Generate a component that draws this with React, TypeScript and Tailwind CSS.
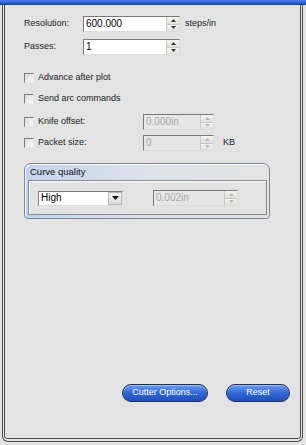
import React from "react";

const font = { fontFamily: '"Liberation Sans", Arial, sans-serif' };

function Spinner({ disabled }: { disabled?: boolean }) {
  const arrow = disabled ? "#b8b8b8" : "#333";
  return (
    <div className="flex h-full w-[13px] flex-col border-l border-[#c8c8c8] bg-[#ecebe6]">
      <div className="flex flex-1 items-center justify-center border-b border-[#c8c8c8] bg-gradient-to-b from-[#f6f5f2] to-[#e2e0da]">
        <svg width="5" height="3" viewBox="0 0 5 3"><path d="M0 3 L2.5 0 L5 3 Z" fill={arrow} /></svg>
      </div>
      <div className="flex flex-1 items-center justify-center bg-gradient-to-b from-[#f6f5f2] to-[#e2e0da]">
        <svg width="5" height="3" viewBox="0 0 5 3"><path d="M0 0 L2.5 3 L5 0 Z" fill={arrow} /></svg>
      </div>
    </div>
  );
}

function SpinInput({ value, width, disabled }: { value: string; width: number; disabled?: boolean }) {
  return (
    <div
      className={`flex h-[16px] border border-t-[#7a7a7a] border-l-[#7a7a7a] border-r-[#dcdcdc] border-b-[#dcdcdc] ${disabled ? "bg-[#e6e6e6]" : "bg-white"}`}
      style={{ width }}
    >
      <div className={`flex flex-1 items-center pl-[2px] text-[10px] leading-none ${disabled ? "text-[#a8a8a8]" : "text-black"}`}>{value}</div>
      <Spinner disabled={disabled} />
    </div>
  );
}

function Checkbox() {
  return (
    <div className="h-[10px] w-[10px] border border-t-[#7d7d7d] border-l-[#7d7d7d] border-r-[#e8e8e8] border-b-[#e8e8e8] bg-gradient-to-br from-[#dcdcd6] to-[#f8f8f6]" />
  );
}

export default function App() {
  return (
    <div className="flex h-[445px] w-[306px] flex-col bg-[#e3e3e3] text-[9px] text-[#222]" style={font}>
      <div className="h-[5px] w-full shrink-0 border-b border-[#1c3f94] bg-gradient-to-b from-[#4f82e4] to-[#1f4fc0]" />
      <div className="ml-[2px] mr-[3px] mb-[3px] flex flex-1 flex-col rounded-b-[6px] border-x-[3px] border-b-[4px] border-double border-[#4e4e4e]">
        <div className="flex flex-1 flex-col pl-[19px] pt-[11px]">
          <div className="flex h-[16px] items-center">
            <div className="w-[59px]">Resolution:</div>
            <SpinInput value="600.000" width={97} />
            <div className="ml-[5px]">steps/in</div>
          </div>
          <div className="mt-[7px] flex h-[16px] items-center">
            <div className="w-[59px]">Passes:</div>
            <SpinInput value="1" width={97} />
          </div>

          <div className="mt-[15px] flex h-[16px] items-center">
            <Checkbox />
            <div className="ml-[4px]">Advance after plot</div>
          </div>
          <div className="mt-[5px] flex h-[16px] items-center">
            <Checkbox />
            <div className="ml-[4px]">Send arc commands</div>
          </div>
          <div className="mt-[7px] flex h-[16px] items-center">
            <Checkbox />
            <div className="ml-[4px] w-[105px]">Knife offset:</div>
            <SpinInput value="0.000in" width={71} disabled />
          </div>
          <div className="mt-[5px] flex h-[16px] items-center">
            <Checkbox />
            <div className="ml-[4px] w-[105px]">Packet size:</div>
            <SpinInput value="0" width={71} disabled />
            <div className="ml-[9px]">KB</div>
          </div>

          <div className="mt-[12px] flex w-[246px] flex-col rounded-t-[7px] rounded-b-[4px] border border-[#7d8696] bg-gradient-to-r from-[#c3d3ee] via-[#dde2ea] to-[#e3e3e3] shadow-[inset_1px_1px_0_#ffffff]">
            <div className="flex h-[16px] items-center pl-[5px] text-[9.5px] text-[#111]">Curve quality</div>
            <div className="mb-[3px] ml-[3px] mr-[2px] flex items-center border border-[#8a8a8a] bg-[#e3e3e3] pb-[8px] pl-[9px] pt-[9px] shadow-[inset_1px_1px_0_#ffffff]">
              <div className="flex h-[15px] w-[85px] border border-t-[#7a7a7a] border-l-[#7a7a7a] border-r-[#dcdcdc] border-b-[#dcdcdc] bg-white">
                <div className="flex flex-1 items-center pl-[2px] text-[10px] leading-none text-black">High</div>
                <div className="flex w-[14px] items-center justify-center border border-[#b8b8b8] bg-gradient-to-b from-[#f6f5f2] to-[#dcdad4]">
                  <svg width="7" height="4" viewBox="0 0 7 4"><path d="M0 0 L3.5 4 L7 0 Z" fill="#111" /></svg>
                </div>
              </div>
              <div className="ml-[30px]">
                <SpinInput value="0.002in" width={85} disabled />
              </div>
            </div>
          </div>

          <div className="flex-1" />

          <div className="mb-[36px] flex justify-end gap-[18px] pr-[10px]">
            <button className="flex h-[18px] w-[86px] items-center justify-center rounded-full border border-[#1f2f5a] bg-gradient-to-b from-[#6f9cf0] via-[#2f67d8] to-[#1f4fb8] text-[9px] text-white shadow-[inset_0_1px_0_#9dbdf6]" style={font}>
              Cutter Options...
            </button>
            <button className="flex h-[18px] w-[64px] items-center justify-center rounded-full border border-[#1f2f5a] bg-gradient-to-b from-[#6f9cf0] via-[#2f67d8] to-[#1f4fb8] text-[9px] text-white shadow-[inset_0_1px_0_#9dbdf6]" style={font}>
              Reset
            </button>
          </div>
        </div>
      </div>
    </div>
  );
}
